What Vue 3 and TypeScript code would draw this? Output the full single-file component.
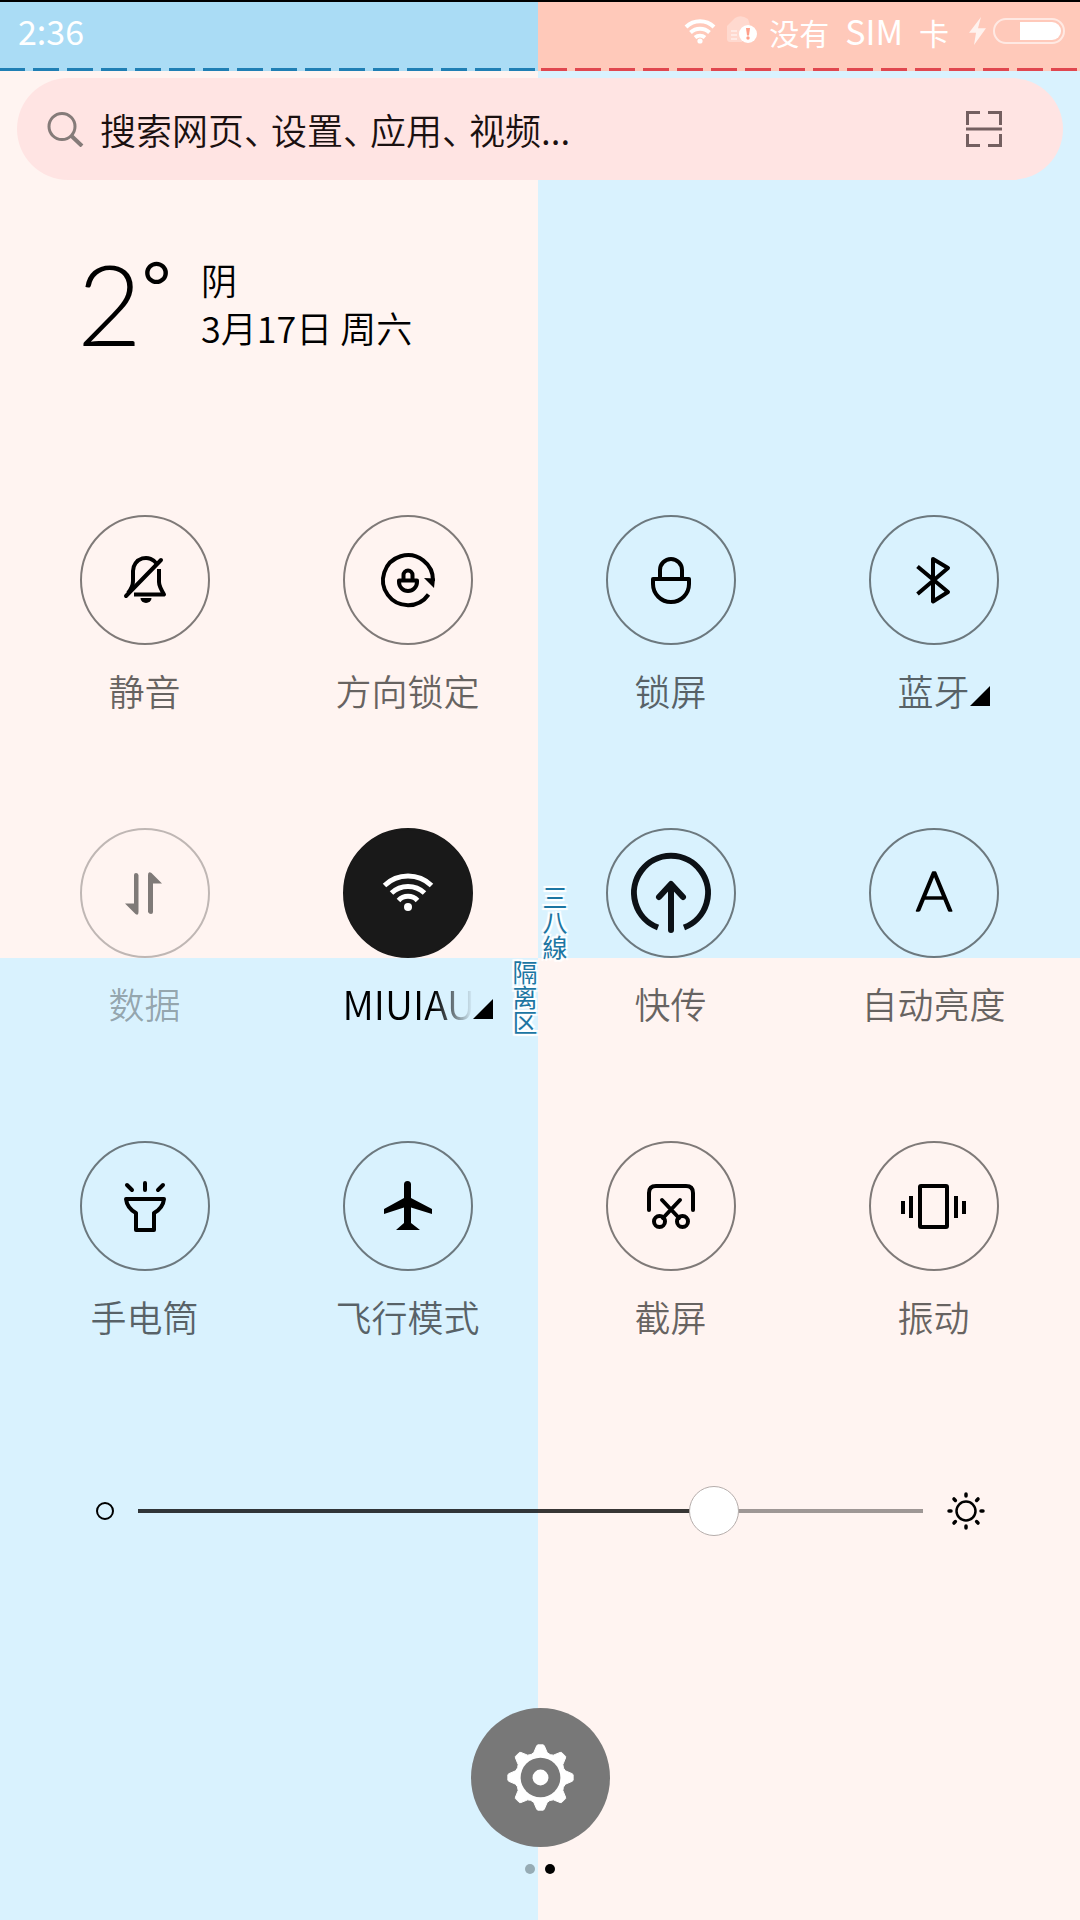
<script setup lang="ts">
import { computed, ref } from 'vue'

interface Tile {
  id: string
  label: string
  state?: 'on' | 'disabled'
  more?: boolean
  clipped?: boolean
}

const tiles: Tile[] = [
  { id: 'mute', label: '静音' },
  { id: 'rotation', label: '方向锁定' },
  { id: 'lock', label: '锁屏' },
  { id: 'bluetooth', label: '蓝牙', more: true },
  { id: 'data', label: '数据', state: 'disabled' },
  { id: 'wifi', label: 'MIUIAU', state: 'on', more: true, clipped: true },
  { id: 'share', label: '快传' },
  { id: 'auto', label: '自动亮度' },
  { id: 'torch', label: '手电筒' },
  { id: 'flight', label: '飞行模式' },
  { id: 'capture', label: '截屏' },
  { id: 'vibrate', label: '振动' },
]

const hintParts = ['搜索网页', '、', '设置', '、', '应用', '、', '视频...']
const query = ref('')
const brightness = ref(75)
const fill = computed(() => ({ '--fill': brightness.value + '%' }))

// Eight-toothed gear outline, listed as radius / half-angle pairs per tooth.
const gear = computed(() => {
  const profile = [[25, -22], [26, -15], [32, -7], [33, -5], [33, 5], [32, 7], [26, 15]]
  const points: string[] = []
  for (let tooth = 0; tooth < 8; tooth++) {
    for (const [r, a] of profile) {
      const t = ((tooth * 45 + a - 90) * Math.PI) / 180
      points.push(`${(70 + r * Math.cos(t)).toFixed(2)},${(70 + r * Math.sin(t)).toFixed(2)}`)
    }
  }
  return points.join(' ')
})

const rays = [0, 45, 90, 135, 180, 225, 270, 315]
</script>

<template>
  <div class="screen">
    <div class="seam seam-top" aria-hidden="true">三八線</div>
    <div class="seam seam-bottom" aria-hidden="true">隔离区</div>

    <header class="status">
      <time class="clock">2:36</time>
      <div class="indicators">
        <svg class="ind-wifi" width="32" height="26" viewBox="0 0 32 26" fill="none" stroke="#fff" stroke-width="4">
          <path d="M2 9A20 20 0 0 1 30 9" />
          <path d="M6.500 14.500A14 14 0 0 1 25.500 14.500" />
          <path d="M11 19.500A8 8 0 0 1 21 19.500" />
          <circle cx="16" cy="23" r="2.600" fill="#fff" stroke="none" />
        </svg>
        <svg class="ind-sim" width="32" height="32" viewBox="0 0 32 32">
          <path d="M1 11L9 3Q15-1 22 4L24 10L16 27H4Q1 27 1 24Z" fill="#fff" fill-opacity=".3" />
          <path d="M5 16H11M5 20H11M5 24H11" stroke="#fff" stroke-opacity=".6" stroke-width="1.500" />
          <circle cx="22" cy="19" r="9" fill="#fff" />
          <path d="M20 13H24L23 20.500H21Z" fill="#ff9f8a" />
          <circle cx="22" cy="23" r="1.700" fill="#ff9f8a" />
        </svg>
        <span class="carrier"><span>没有</span><span class="latin">SIM</span><span>卡</span></span>
        <svg class="ind-bolt" width="18" height="28" viewBox="0 0 18 30" preserveAspectRatio="none">
          <path d="M12 0L0 17H7L5 30L17 12H9Z" fill="#fff" fill-opacity=".75" />
        </svg>
        <svg class="ind-battery" width="72" height="26" viewBox="0 0 72 26">
          <rect x="1" y="1" width="70" height="24" rx="12" fill="none" stroke="#fff" stroke-opacity=".6" stroke-width="2" />
          <path d="M27 4H59A9 9 0 0 1 59 22H27Z" fill="#fff" />
        </svg>
      </div>
    </header>

    <form class="search" role="search" @submit.prevent>
      <svg width="38" height="36" viewBox="0 0 38 36" fill="none" stroke="#857b79" stroke-width="3">
        <circle cx="16" cy="15.500" r="13" />
        <path d="M25 24.500L36 35" stroke-width="4" />
      </svg>
      <label class="field">
        <input v-model="query" type="text" aria-label="搜索网页、设置、应用、视频" />
        <span v-if="!query" class="hint"><span v-for="(part, i) in hintParts" :key="i" :class="{ comma: part === '、' }">{{ part }}</span></span>
      </label>
      <button class="scan" type="button" aria-label="扫一扫">
        <svg width="36" height="36" viewBox="0 0 36 36" fill="none" stroke="#745f60" stroke-width="3">
          <path d="M14 1.500H1.500V14M22 1.500H34.500V14M0 18H36M1.500 23V34.500H14M34.500 23V34.500H22" />
        </svg>
      </button>
    </form>

    <section class="weather">
      <div class="temp">2<span class="degree">°</span></div>
      <div class="details">
        <div>阴</div>
        <div>3月17日 周六</div>
      </div>
    </section>

    <main class="tiles">
      <button v-for="tile in tiles" :key="tile.id" type="button" class="tile" :class="tile.state">
        <svg class="disc" viewBox="0 0 130 130" aria-hidden="true">
          <circle class="ring" cx="65" cy="65" r="64" />
          <g v-if="tile.id === 'mute'" class="line">
            <path d="M46 81L81 45" stroke-linecap="round" />
            <path d="M48 78Q53 72 53 66V56A13 13 0 0 1 77 49" />
            <path d="M79 54V67Q79 71 84 79.500H54" stroke-linejoin="round" />
            <path class="solid" d="M60.500 83H71.500A5.500 5 0 0 1 60.500 83Z" />
          </g>
          <g v-else-if="tile.id === 'rotation'" class="line">
            <path d="M85.500 79.500A25 25 0 1 1 90 66" />
            <path class="solid" d="M81 63L92 63.500L91 73Z" />
            <path d="M60.500 65V60A4.500 4.500 0 0 1 69.500 60V65M56 65.500H74V67A9 9 0 0 1 56 67Z" stroke-linejoin="round" />
          </g>
          <g v-else-if="tile.id === 'lock'" class="line">
            <path d="M54 64V55A11 11 0 0 1 76 55V64" />
            <path d="M47 64H83V69A18 18 0 0 1 47 69Z" stroke-linejoin="round" />
          </g>
          <path v-else-if="tile.id === 'bluetooth'" class="line" d="M48.500 51.500L79 77L64 86.500V44L79 53L48.500 79" stroke-linejoin="round" />
          <g v-else-if="tile.id === 'data'" class="solid">
            <path d="M54 47Q54 45 56 45T58.500 47V84Q58.500 88 55.500 86L45 75.500H54Z" />
            <path d="M73 84Q73 86 71 86T68 84V47Q68 43 71.500 45L82 55.500H73Z" />
          </g>
          <g v-else-if="tile.id === 'wifi'" class="wifi">
            <path d="M41.500 57.500A34 34 0 0 1 88.500 57.500" />
            <path d="M48.500 65A24 24 0 0 1 81.500 65" />
            <path d="M55.500 72.500A13 13 0 0 1 74.500 72.500" />
            <circle cx="65" cy="79" r="4" />
          </g>
          <g v-else-if="tile.id === 'share'" class="line heavy">
            <path d="M52 99.500A37 37 0 1 1 78 99.500" />
            <path d="M65 102V57M53 69L65 56L77 69" stroke-linecap="round" stroke-linejoin="round" />
          </g>
          <text v-else-if="tile.id === 'auto'" class="auto" x="65" y="83" text-anchor="middle">A</text>
          <g v-else-if="tile.id === 'torch'" class="line">
            <path d="M47 44L52 49M65 42V49M83 44L78 49" stroke-linecap="round" />
            <path d="M46 58H84Q83 67 74 72V89H56V72Q47 67 46 58Z" stroke-linejoin="round" />
          </g>
          <path v-else-if="tile.id === 'flight'" class="solid" d="M61 57V43.500A3.500 3.500 0 0 1 68 43.500V57L89 68V73L68 66.500V82L77 89H53L61 82V66.500L41 73V68Z" />
          <g v-else-if="tile.id === 'capture'" class="line">
            <path d="M43 69V52Q43 45 50 45H80Q87 45 87 52V69" stroke-linecap="round" />
            <path d="M56 59L73 77M74 59L57 77" stroke-linecap="round" />
            <circle cx="53.500" cy="80.500" r="5.500" /><circle cx="76.500" cy="80.500" r="5.500" />
          </g>
          <g v-else class="line">
            <rect x="51" y="45" width="27" height="41" rx="1" />
            <path d="M42 55V77M34 60V73M87 55V77M95 60V73" />
          </g>
        </svg>
        <span class="label">
          <span :class="{ clipped: tile.clipped }">{{ tile.label }}</span>
          <svg v-if="tile.more" class="more" width="20" height="20" viewBox="0 0 20 20" aria-hidden="true"><path d="M20 0V20H0Z" /></svg>
        </span>
      </button>
    </main>

    <section class="brightness">
      <svg width="20" height="20" viewBox="0 0 20 20" fill="none" stroke="#000" stroke-width="2" aria-hidden="true">
        <circle cx="10" cy="10" r="8" />
      </svg>
      <input v-model.number="brightness" class="slider" type="range" min="0" max="100" aria-label="亮度" :style="fill" />
      <svg width="38" height="38" viewBox="-19 -19 38 38" fill="none" stroke="#000" aria-hidden="true">
        <circle r="9.500" stroke-width="2.500" />
        <path v-for="angle in rays" :key="angle" d="M0-15V-17" :transform="`rotate(${angle})`" stroke-width="3.500" stroke-linecap="round" />
      </svg>
    </section>

    <footer class="foot">
      <button class="settings" type="button" aria-label="设置">
        <svg viewBox="0 0 140 140" aria-hidden="true">
          <polygon :points="gear" fill="#fff" stroke="#fff" stroke-width="1" stroke-linejoin="round" />
          <circle cx="70" cy="70" r="20" fill="#787878" />
          <circle cx="70" cy="70" r="8" fill="#fff" />
        </svg>
      </button>
      <div class="pages"><i></i><i class="current"></i></div>
    </footer>
  </div>
</template>

<style>
body {
  margin: 0;
}
</style>

<style scoped>
.screen {
  --pink: #fff4f1;
  --blue: #d9f2fe;
  --split: calc(50% - 2px);
  position: relative;
  box-sizing: border-box;
  display: flex;
  flex-direction: column;
  min-height: 100vh;
  padding-bottom: 46px;
  font-family: "Noto Sans CJK SC", sans-serif;
  font-weight: 350;
  font-size: 36px;
  line-height: 48px;
  color: #000;
  background:
    linear-gradient(90deg, var(--pink) var(--split), var(--blue) var(--split)) top / 100% var(--split) no-repeat,
    linear-gradient(90deg, var(--blue) var(--split), var(--pink) var(--split));
}

button {
  margin: 0;
  padding: 0;
  border: 0;
  background: none;
  font: inherit;
  color: inherit;
}

svg {
  display: block;
  flex: none;
}

.seam {
  position: absolute;
  writing-mode: vertical-rl;
  font-size: 25px;
  line-height: 24px;
  font-weight: 400;
  color: #1c76a3;
  text-shadow: 0 0 3px #fff, 2px 2px 1px #fff, -2px -2px 1px #fff, 2px -2px 1px #fff, -2px 2px 1px #fff;
}

.seam-top {
  left: calc(50% + 3px);
  bottom: 50%;
}

.seam-bottom {
  right: calc(50% + 3px);
  top: 50%;
}

.status {
  position: relative;
  box-sizing: border-box;
  display: flex;
  align-items: center;
  justify-content: space-between;
  height: 71px;
  padding: 0 15px 11px 18px;
  border-top: 2px solid #000;
  background: linear-gradient(90deg, #aadcf5 var(--split), #ffc9ba var(--split));
  color: #fff;
  font-size: 34px;
}

.status::before,
.status::after {
  content: "";
  position: absolute;
  bottom: 0;
  height: 3px;
}

.status::before {
  left: -1px;
  right: calc(50% + 2px);
  background: repeating-linear-gradient(90deg, #1f7fb4 0 26px, transparent 26px 34px);
}

.status::after {
  left: calc(50% + 1px);
  right: 0;
  background: repeating-linear-gradient(90deg, #e0474f 0 26px, transparent 26px 34px);
}

.clock,
.carrier {
  font-weight: 400;
}

.indicators {
  display: flex;
  align-items: center;
}

.ind-sim {
  margin-left: 10px;
}

.carrier {
  display: flex;
  align-items: baseline;
  gap: 16px;
  margin: 0 20px 0 11px;
  font-size: 30px;
}

.latin {
  font-size: 34px;
}

.ind-bolt {
  margin-right: 6px;
}

.search {
  display: flex;
  align-items: center;
  height: 102px;
  margin: 7px 17px 0;
  padding: 0 61px 0 29px;
  box-sizing: border-box;
  border-radius: 51px;
  background: #ffe4e3;
  color: #1a1010;
}

.field {
  flex: 1;
  display: grid;
  align-items: center;
  margin-left: 16px;
}

.field > * {
  grid-area: 1 / 1;
}

.field input {
  width: 100%;
  height: 48px;
  padding: 0;
  border: 0;
  outline: 0;
  background: none;
  font: inherit;
  color: inherit;
}

.hint {
  pointer-events: none;
}

.comma {
  padding-right: 9px;
  font-feature-settings: "halt";
}

.weather {
  display: flex;
  align-items: center;
  height: 96px;
  margin: 75px 0 0 77px;
}

.temp {
  display: flex;
  align-items: flex-start;
  width: 124px;
  font-family: Lato, sans-serif;
  font-weight: 300;
  font-size: 112px;
  line-height: 96px;
}

.degree {
  font-size: 70px;
  font-weight: 400;
  line-height: 60px;
}

.tiles {
  display: grid;
  grid-template-columns: repeat(4, 1fr);
  row-gap: 114px;
  margin-top: 164px;
  padding: 0 15px 0 13px;
}

.tile {
  display: flex;
  flex-direction: column;
  align-items: center;
  gap: 21px;
}

.disc {
  width: 130px;
  height: 130px;
}

.ring {
  fill: none;
  stroke: rgba(0, 0, 0, 0.5);
  stroke-width: 2;
}

.line {
  fill: none;
  stroke: #000;
  stroke-width: 4;
}

.heavy {
  stroke: #0c1116;
  stroke-width: 6;
}

.solid {
  fill: #000;
  stroke: none;
}

.wifi {
  fill: none;
  stroke: #fff;
  stroke-width: 5;
}

.wifi circle {
  fill: #fff;
  stroke: none;
}

.auto {
  font-family: Lato, sans-serif;
  font-size: 56px;
  font-weight: 300;
  stroke: #000;
  stroke-width: 1.5;
  stroke-linejoin: round;
}

.label {
  position: relative;
  color: rgba(0, 0, 0, 0.6);
  white-space: nowrap;
}

.clipped {
  display: block;
  width: 130px;
  text-align: left;
  font-size: 39px;
  -webkit-mask-image: linear-gradient(90deg, #000 70%, transparent);
  mask-image: linear-gradient(90deg, #000 70%, transparent);
}

.more {
  position: absolute;
  left: 100%;
  bottom: 8px;
}

.on .ring {
  fill: #191919;
  stroke: #191919;
}

.on .label {
  color: #000;
}

.disabled .ring {
  stroke: rgba(0, 0, 0, 0.25);
}

.disabled .solid {
  fill: rgba(0, 0, 0, 0.5);
}

.disabled .label {
  color: rgba(0, 0, 0, 0.32);
}

.brightness {
  display: flex;
  align-items: center;
  height: 50px;
  margin-top: 146px;
  padding: 0 95px;
}

.slider {
  flex: 1;
  min-width: 0;
  height: 50px;
  margin: 0 24px 0 23px;
  appearance: none;
  background: none;
}

.slider::-webkit-slider-runnable-track {
  height: 4px;
  background: linear-gradient(90deg, rgba(0, 0, 0, 0.78) var(--fill), rgba(0, 0, 0, 0.38) var(--fill));
}

.slider::-webkit-slider-thumb {
  appearance: none;
  box-sizing: border-box;
  width: 50px;
  height: 50px;
  margin-top: -23px;
  border: 1px solid #b5adab;
  border-radius: 50%;
  background: #fff;
}

.foot {
  display: flex;
  flex-direction: column;
  align-items: center;
  gap: 17px;
  margin-top: auto;
}

.settings {
  width: 139px;
  height: 139px;
  border-radius: 50%;
  background: #787878;
}

.pages {
  display: flex;
  gap: 10px;
}

.pages i {
  width: 10px;
  height: 10px;
  border-radius: 50%;
  background: #96abb4;
}

.pages .current {
  background: #000;
}
</style>
